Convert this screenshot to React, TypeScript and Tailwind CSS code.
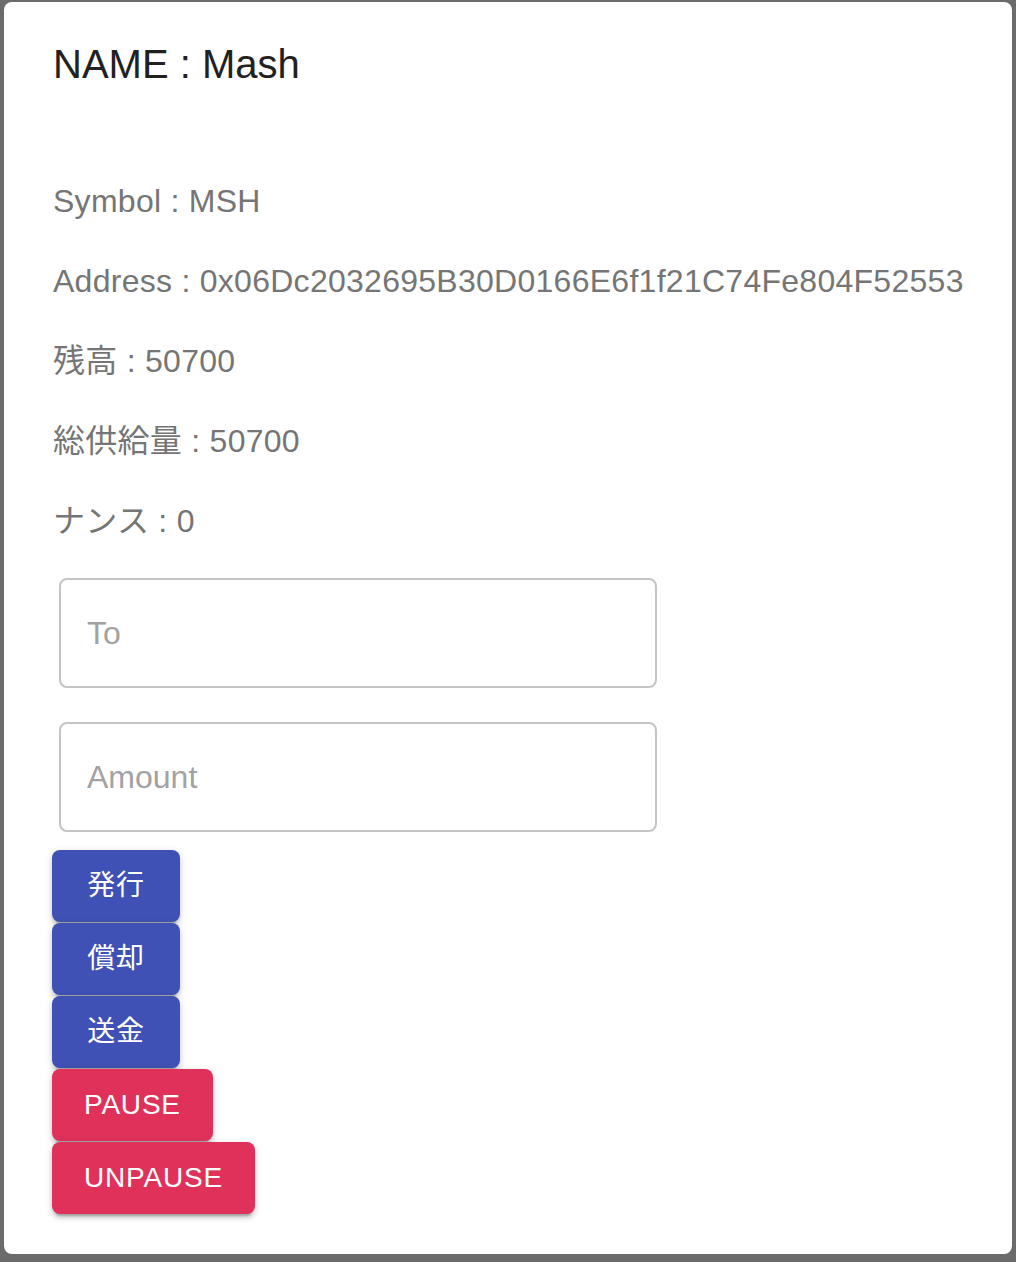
import React from 'react'

const font = { fontFamily: '"Liberation Sans", "Noto Sans CJK JP", sans-serif' }

function TokenCard() {
  const rows = [
    'Symbol : MSH',
    'Address : 0x06Dc2032695B30D0166E6f1f21C74Fe804F52553',
    '残高 : 50700',
    '総供給量 : 50700',
    'ナンス : 0',
  ]
  const blueBtns = ['発行', '償却', '送金']
  const redBtns = ['PAUSE', 'UNPAUSE']
  const btn =
    'h-[72px] mb-px min-w-[128px] px-8 rounded-lg text-white text-[28px] tracking-[0.8px] flex items-center justify-center shadow-[0_6px_2px_-4px_rgba(0,0,0,0.2),0_4px_4px_0_rgba(0,0,0,0.14),0_2px_10px_0_rgba(0,0,0,0.12)]'

  return (
    <div className="w-[1008px] h-[1252px] bg-white rounded-lg pl-[49px] pt-[30px] flex flex-col items-start">
      {/* Title */}
      <div className="h-16 flex items-center text-[40px] text-[#212121]">NAME : Mash</div>

      {/* Info rows */}
      <div className="mt-[65px]">
        {rows.map((r) => (
          <div key={r} className="h-20 flex items-center text-[32px] tracking-[0.27px] text-[#757575] whitespace-nowrap">
            {r}
          </div>
        ))}
      </div>

      {/* Inputs */}
      <div className="ml-[6px] mt-[17px] flex flex-col gap-[34px]">
        {['To', 'Amount'].map((p) => (
          <input
            key={p}
            placeholder={p}
            style={font}
            className="w-[598px] h-[110px] border-2 border-[#c4c4c4] rounded-lg px-[26px] text-[32px] text-[#212121] placeholder:text-[#a2a2a2] outline-none"
          />
        ))}
      </div>

      {/* Buttons */}
      <div className="-ml-px mt-[18px] flex flex-col items-start">
        {blueBtns.map((b) => (
          <button key={b} style={font} className={btn + ' bg-[#3f51b5]'}>
            {b}
          </button>
        ))}
        {redBtns.map((b) => (
          <button key={b} style={font} className={btn + ' bg-[#e0315b]'}>
            {b}
          </button>
        ))}
      </div>
    </div>
  )
}

export default function App() {
  return (
    <div style={font} className="w-[1016px] h-[1262px] bg-[#6b6b6b] pt-[2px] pl-[4px]">
      <TokenCard />
    </div>
  )
}
